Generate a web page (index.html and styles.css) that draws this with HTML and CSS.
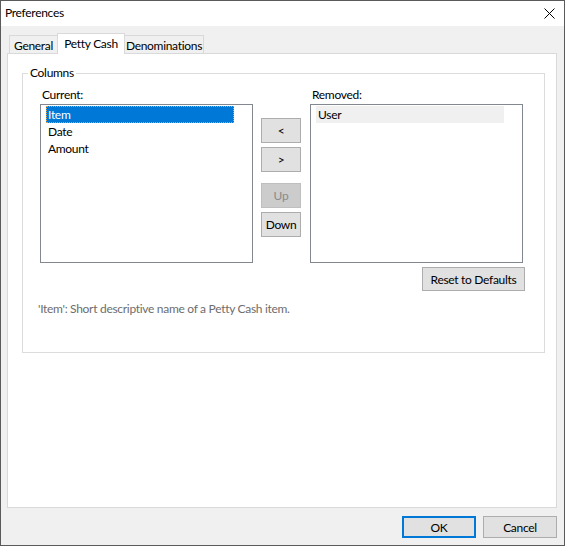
FILE: index.html
```html
<!DOCTYPE html>
<html>
<head>
<meta charset="utf-8">
<link rel="stylesheet" href="styles.css">
</head>
<body>
<div class="window">
  <div class="titlebar">
    <span class="title">Preferences</span>
    <svg class="close" width="11" height="11" viewBox="0 0 11 11"><path d="M0.5 0.5 L10.5 10.5 M10.5 0.5 L0.5 10.5" stroke="#000" stroke-width="1" fill="none"/></svg>
  </div>
  <div class="content">
    <div class="tabs">
      <div class="tab tab-general">General</div>
      <div class="tab tab-active">Petty Cash</div>
      <div class="tab tab-denom">Denominations</div>
    </div>
    <div class="panel">
      <fieldset class="group">
        <legend>Columns</legend>
        <div class="cols">
          <div class="label lbl-current">Current:</div>
          <div class="label lbl-removed">Removed:</div>
          <div class="listbox list-current">
            <div class="row row-selected">Item</div>
            <div class="row">Date</div>
            <div class="row">Amount</div>
          </div>
          <div class="movebtns">
            <button class="btn btn-small">&lt;</button>
            <button class="btn btn-small">&gt;</button>
            <button class="btn btn-small btn-disabled spaced">Up</button>
            <button class="btn btn-small">Down</button>
          </div>
          <div class="listbox list-removed">
            <div class="row row-inactive">User</div>
          </div>
          <button class="btn btn-reset">Reset to Defaults</button>
        </div>
        <div class="desc">'Item': Short descriptive name of a Petty Cash item.</div>
      </fieldset>
    </div>
    <div class="footer">
      <button class="btn btn-dlg btn-default">OK</button>
      <button class="btn btn-dlg">Cancel</button>
    </div>
  </div>
</div>
</body>
</html>
```
FILE: styles.css
```css
* { box-sizing: border-box; }
html, body { margin: 0; padding: 0; }
body {
  font-family: Lato, "Open Sans", sans-serif;
  font-size: 12px;
  letter-spacing: -0.3px;
  color: #000;
  background: #fff;
}
.window {
  width: 565px;
  height: 546px;
  border: 1px solid #5a5a5a;
  display: flex;
  flex-direction: column;
  background: #f0f0f0;
}
.titlebar {
  height: 25px;
  background: #fff;
  display: flex;
  align-items: center;
  justify-content: space-between;
  padding-left: 4px;
  padding-right: 9px;
}
.title { line-height: 16px; margin-top: -1px; }
.close { display: block; }
.content {
  flex: 1;
  display: flex;
  flex-direction: column;
  padding: 0 7px 0 6px;
}
.tabs {
  display: flex;
  align-items: flex-end;
  padding-top: 7px;
  padding-left: 2px;
  height: 27px;
}
.tab {
  height: 18px;
  border: 1px solid #d9d9d9;
  border-bottom: none;
  background: #f0f0f0;
  display: flex;
  align-items: center;
  justify-content: center;
  padding-top: 1px;
  line-height: 15px;
  white-space: nowrap;
}
.tab-general { width: 49px; }
.tab-active {
  width: 68px;
  height: 21px;
  margin-left: -1px;
  margin-bottom: -1px;
  background: #fff;
  position: relative;
  z-index: 1;
  padding-top: 0;
  padding-bottom: 2px;
}
.tab-denom { width: 80px; margin-left: -1px; }
.panel {
  flex: 1;
  background: #fff;
  border: 1px solid #d9d9d9;
  padding: 11px 11px 0 14px;
}
.group {
  margin: 0;
  padding: 0 0 0 5px;
  border: 1px solid #dcdcdc;
  height: 288px;
  min-width: 0;
}
.group legend {
  padding: 0 2px;
  line-height: 16px;
}
.cols {
  margin-left: 12px;
  padding-top: 6px;
  display: grid;
  grid-template-columns: 213px 8px 40px 9px 213px;
  grid-template-rows: 17px 159px auto;
}
.label { line-height: 15px; }
.lbl-current { grid-column: 1; grid-row: 1; padding-left: 2px; }
.lbl-removed { grid-column: 5; grid-row: 1; padding-left: 2px; }
.listbox {
  border: 1px solid #828790;
  background: #fff;
  padding: 1px 0 0 5px;
  grid-row: 2;
}
.list-current { grid-column: 1; }
.list-removed { grid-column: 5; }
.row {
  width: 188px;
  height: 17px;
  line-height: 17px;
  padding-left: 2px;
}
.row-selected {
  background: #0078d7;
  color: #fff;
  outline: 1px dotted #e8a040;
  outline-offset: -1px;
}
.row-inactive { background: #f0f0f0; }
.movebtns {
  grid-column: 3;
  grid-row: 2;
  padding-top: 14px;
  display: flex;
  flex-direction: column;
  gap: 4px;
}
.btn {
  font-family: inherit;
  font-size: 12px;
  letter-spacing: -0.3px;
  color: #000;
  background: #e1e1e1;
  border: 1px solid #adadad;
  padding: 0;
  margin: 0;
  line-height: 15px;
}
.btn-small { width: 40px; height: 25px; }
.spaced { margin-top: 7px; }
.btn-disabled {
  background: #cccccc;
  border-color: #bfbfbf;
  color: #8a8a8a;
}
.btn-reset {
  grid-column: 5;
  grid-row: 3;
  justify-self: end;
  margin-right: -2px;
  margin-top: 4px;
  width: 103px;
  height: 24px;
}
.desc {
  margin-left: 10px;
  margin-top: 10px;
  line-height: 15px;
  color: #6d6d6d;
}
.footer {
  height: 37px;
  display: flex;
  justify-content: flex-end;
  gap: 7px;
  padding-top: 8px;
}
.btn-dlg { width: 74px; height: 22px; }
.btn-default { border: 2px solid #0078d7; }
```
